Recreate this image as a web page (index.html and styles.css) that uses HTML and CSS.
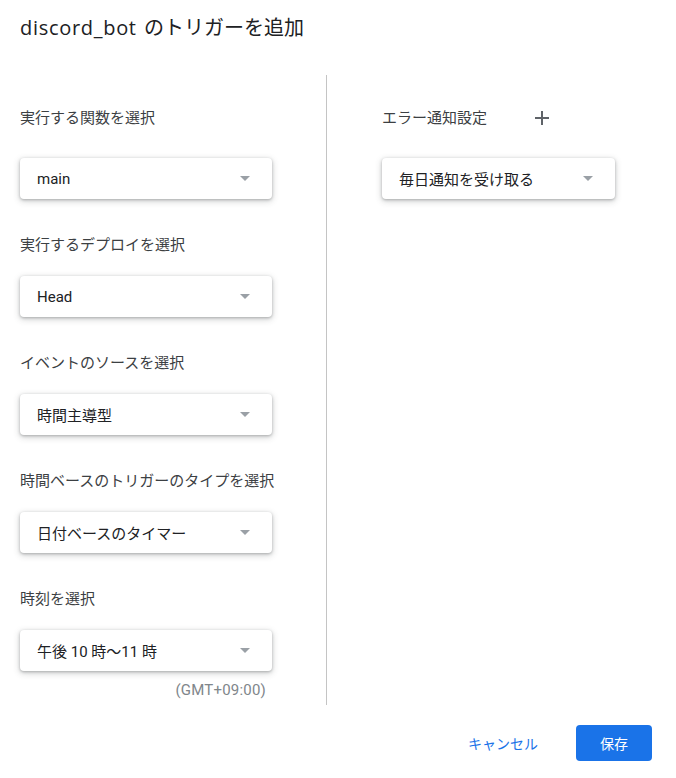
FILE: index.html
```html
<!DOCTYPE html>
<html lang="ja">
<head>
<meta charset="utf-8">
<title>discord_bot のトリガーを追加</title>
<link rel="stylesheet" href="styles.css">
</head>
<body>
<div class="dialog">
  <h1 class="title"><span class="title-name">discord_bot</span> のトリガーを追加</h1>
  <div class="columns">
    <div class="col col-left">
      <div class="field field-first">
        <div class="label label-tall">実行する関数を選択</div>
        <div class="select"><span>main</span><span class="arrow"></span></div>
      </div>
      <div class="field">
        <div class="label">実行するデプロイを選択</div>
        <div class="select"><span>Head</span><span class="arrow"></span></div>
      </div>
      <div class="field">
        <div class="label">イベントのソースを選択</div>
        <div class="select"><span>時間主導型</span><span class="arrow"></span></div>
      </div>
      <div class="field">
        <div class="label">時間ベースのトリガーのタイプを選択</div>
        <div class="select"><span>日付ベースのタイマー</span><span class="arrow"></span></div>
      </div>
      <div class="field">
        <div class="label">時刻を選択</div>
        <div class="select"><span>午後 10 時〜11 時</span><span class="arrow"></span></div>
        <div class="tz">(GMT+09:00)</div>
      </div>
    </div>
    <div class="col col-right">
      <div class="field field-first">
        <div class="label-row">
          <div class="label label-tall">エラー通知設定</div>
          <button class="icon-btn" aria-label="追加">
            <svg width="14" height="14" viewBox="0 0 14 14"><path d="M7 0v14M0 7h14" stroke="#5f6368" stroke-width="2" fill="none"/></svg>
          </button>
        </div>
        <div class="select select-narrow"><span>毎日通知を受け取る</span><span class="arrow"></span></div>
      </div>
    </div>
  </div>
  <div class="actions">
    <button class="btn btn-text">キャンセル</button>
    <button class="btn btn-primary">保存</button>
  </div>
</div>
</body>
</html>
```

FILE: styles.css
```css
* { box-sizing: border-box; }
html, body { margin: 0; padding: 0; background: #fff; }
body {
  font-family: Roboto, "Noto Sans CJK JP", "Noto Sans", sans-serif;
  color: #202124;
  width: 676px;
  height: 778px;
  overflow: hidden;
}
.dialog { padding: 0 24px 0 20px; }
.title {
  margin: 0;
  padding-top: 16px;
  font-family: "Open Sans", "Noto Sans CJK JP", sans-serif;
  font-size: 20px;
  line-height: 24px;
  font-weight: 400;
  color: #202124;
  height: 75px;
  word-spacing: 2px;
}
.title-name { letter-spacing: 0.7px; }
.columns {
  display: flex;
  height: 630px;
}
.col-left {
  width: 307px;
  border-right: 1px solid #c4c4c4;
  padding-top: 23px;
}
.col-right {
  padding-left: 55px;
  padding-top: 23px;
}
.field { margin-top: 36px; }
.field-first { margin-top: 0; }
.label {
  font-size: 15px;
  line-height: 20px;
  color: #3c4043;
  margin-bottom: 21px;
}
.label-tall {
  line-height: 40px;
  margin-bottom: 20px;
}
.label-row { display: flex; align-items: flex-start; }
.icon-btn {
  width: 40px;
  height: 40px;
  margin-left: 35px;
  border: 0;
  background: transparent;
  padding: 0;
  display: flex;
  align-items: center;
  justify-content: center;
}
.select {
  width: 252px;
  height: 41px;
  border-radius: 4px;
  background: #fff;
  box-shadow: 0 1px 3px rgba(60,64,67,.35), 0 2px 6px 1px rgba(60,64,67,.18);
  display: flex;
  align-items: center;
  justify-content: space-between;
  padding: 0 22px 0 17px;
  font-size: 15px;
  color: #202124;
}
.select-narrow { width: 233px; }
.arrow {
  width: 0;
  height: 0;
  border-left: 5px solid transparent;
  border-right: 5px solid transparent;
  border-top: 5px solid #9aa0a6;
}
.tz {
  width: 246px;
  text-align: right;
  font-family: Roboto, sans-serif;
  font-size: 15px;
  letter-spacing: 0.2px;
  line-height: 20px;
  color: #80868b;
  margin-top: 9px;
}
.actions {
  display: flex;
  justify-content: flex-end;
  align-items: center;
  gap: 22px;
  padding-top: 20px;
}
.btn {
  font-family: Roboto, "Noto Sans CJK JP", sans-serif;
  font-size: 14px;
  height: 36px;
  border-radius: 4px;
  border: 0;
  padding: 0 16px;
  cursor: pointer;
}
.btn-text { background: transparent; color: #1a73e8; }
.btn-primary {
  background: #1a73e8;
  color: #fff;
  width: 76px;
  padding: 0;
}
```
